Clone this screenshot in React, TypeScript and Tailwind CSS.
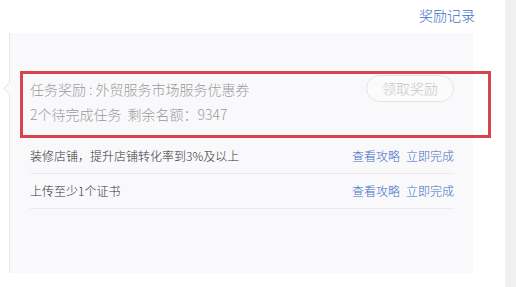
const tasks = [
  { id: 1, title: '装修店铺，提升店铺转化率到3%及以上' },
  { id: 2, title: '上传至少1个证书' },
]

export default function App() {
  return (
    <div
      className="relative flex h-[287px] w-[516px] overflow-hidden bg-white font-light"
      style={{ fontFamily: '"Noto Sans CJK SC", "Microsoft YaHei", sans-serif' }}
    >
      <div className="flex w-[505px] flex-col">
        {/* Header */}
        <div className="flex h-[33px] justify-end pr-[30px] pt-[4px]">
          <a className="text-[14px] leading-[22px] text-[#3d6cc4]">奖励记录</a>
        </div>

        {/* Task panel */}
        <div className="relative ml-[9px] h-[240px] w-[464px] border-l border-[#e6e6e8] bg-[#f9f9fb] pl-[20px] pr-[19px] pt-[44px]">
          <div className="absolute left-[-5px] top-[51px] h-[9px] w-[9px] rotate-45 border-b border-l border-[#e6e6e8] bg-[#fbfbfc]" />

          <div className="flex items-start justify-between">
            <div className="text-[14px] leading-[25px] text-[#9b9b9b]">
              <p>任务奖励<span className="mx-[3px]">:</span>外贸服务市场服务优惠券</p>
              <p>
                2个待完成任务<span className="ml-[6px]">剩余名额：9347</span>
              </p>
            </div>
            <button className="mt-[-2px] h-[27px] w-[88px] rounded-full border border-[#e4e4e6] bg-[#fbfbfc] text-[14px] text-[#c8c8c8]">
              领取奖励
            </button>
          </div>

          <ul className="mt-[12px]">
            {tasks.map((task) => (
              <li
                key={task.id}
                className="flex h-[35px] items-center justify-between border-b border-[#ebebed] text-[12px]"
              >
                <span className="text-[#333]">{task.title}</span>
                <span className="flex gap-[6px] text-[#3d6cc4]">
                  <a>查看攻略</a>
                  <a>立即完成</a>
                </span>
              </li>
            ))}
          </ul>
        </div>
      </div>

      {/* Scrollbar track */}
      <div className="h-full w-[11px] bg-[#f0f0f0]" />

      {/* Highlight annotation */}
      <div className="pointer-events-none absolute left-[20px] top-[71px] h-[67px] w-[471px] border-[3px] border-[#d8444b]" />
    </div>
  )
}
